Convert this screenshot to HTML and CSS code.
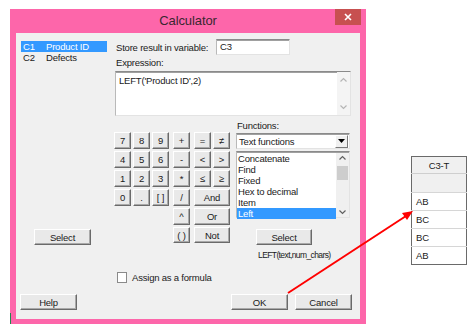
FILE: index.html
```html
<!DOCTYPE html>
<html lang="en">
<head>
    <meta charset="UTF-8">
    <meta name="viewport" content="width=device-width, initial-scale=1.0">
    <title>Calculator</title>
    <link rel="stylesheet" href="styles.css">
</head>
<body>
    <div class="screen">
        <div class="dialog">
            <div class="titlebar">
                <span></span>
                <span class="title">Calculator</span>
                <span class="close">
                    <svg width="26" height="16" viewBox="0 0 26 16"><path d="M10 5 L16 11 M16 5 L10 11" stroke="#fff" stroke-width="1.6"/></svg>
                </span>
            </div>
            <div class="client">
                <div class="main">
                    <div class="left">
                        <div class="listbox">
                            <div class="col-item selected"><span class="col-id">C1</span>Product ID</div>
                            <div class="col-item"><span class="col-id">C2</span>Defects</div>
                        </div>
                        <button class="btn btn-select-cols">Select</button>
                    </div>
                    <div class="right">
                        <div class="store-row">
                            <label class="store-label">Store result in variable:</label>
                            <div class="field store-input">C3</div>
                        </div>
                        <div class="expr-label">Expression:</div>
                        <div class="field expr">
                            <div class="expr-text">LEFT('Product ID',2)</div>
                            <div class="vscroll faint">
                                <svg width="13" height="8" viewBox="0 0 13 8"><path d="M3.5 5.5 L6.5 2.5 L9.5 5.5" fill="none" stroke="#b5b5b5" stroke-width="1.2"/></svg>
                                <svg width="13" height="8" viewBox="0 0 13 8"><path d="M3.5 2.5 L6.5 5.5 L9.5 2.5" fill="none" stroke="#b5b5b5" stroke-width="1.2"/></svg>
                            </div>
                        </div>
                        <div class="lower">
                            <div class="keypad">
                                <button class="btn key">7</button>
                                <button class="btn key">8</button>
                                <button class="btn key">9</button>
                                <button class="btn key op">+</button>
                                <button class="btn key op">=</button>
                                <button class="btn key">&ne;</button>

                                <button class="btn key">4</button>
                                <button class="btn key">5</button>
                                <button class="btn key">6</button>
                                <button class="btn key op">-</button>
                                <button class="btn key op">&lt;</button>
                                <button class="btn key">&gt;</button>

                                <button class="btn key">1</button>
                                <button class="btn key">2</button>
                                <button class="btn key">3</button>
                                <button class="btn key op">*</button>
                                <button class="btn key op">&le;</button>
                                <button class="btn key">&ge;</button>

                                <button class="btn key">0</button>
                                <button class="btn key">.</button>
                                <button class="btn key">[ ]</button>
                                <button class="btn key op">/</button>
                                <button class="btn key wide">And</button>

                                <button class="btn key op col4">^</button>
                                <button class="btn key wide">Or</button>

                                <button class="btn key op col4 last">( )</button>
                                <button class="btn key wide last">Not</button>
                            </div>
                            <div class="functions">
                                <div class="fn-label">Functions:</div>
                                <div class="field dropdown">
                                    <span>Text functions</span>
                                    <span class="drop-btn">
                                        <svg width="7" height="4" viewBox="0 0 7 4"><path d="M0 0 H7 L3.5 4 Z" fill="#000"/></svg>
                                    </span>
                                </div>
                                <div class="field fn-list">
                                    <div class="fn-items">
                                        <div class="fn-item">Concatenate</div>
                                        <div class="fn-item">Find</div>
                                        <div class="fn-item">Fixed</div>
                                        <div class="fn-item">Hex to decimal</div>
                                        <div class="fn-item">Item</div>
                                        <div class="fn-item selected">Left</div>
                                    </div>
                                    <div class="vscroll">
                                        <svg width="13" height="10" viewBox="0 0 13 10"><path d="M3.5 6.5 L6.5 3.5 L9.5 6.5" fill="none" stroke="#606060" stroke-width="1.2"/></svg>
                                        <div class="thumb"></div>
                                        <svg width="13" height="10" viewBox="0 0 13 10"><path d="M3.5 3.5 L6.5 6.5 L9.5 3.5" fill="none" stroke="#606060" stroke-width="1.2"/></svg>
                                    </div>
                                </div>
                                <button class="btn btn-select-fn">Select</button>
                                <div class="fn-syntax">LEFT(text,num_chars)</div>
                            </div>
                        </div>
                    </div>
                </div>
                <div class="formula-row">
                    <span class="checkbox"></span>
                    <span>Assign as a formula</span>
                </div>
                <div class="bottom-row">
                    <button class="btn btn-bottom">Help</button>
                    <button class="btn btn-bottom btn-ok">OK</button>
                    <button class="btn btn-bottom">Cancel</button>
                </div>
            </div>
        </div>

        <table class="sheet">
            <thead>
                <tr><th>C3-T</th></tr>
            </thead>
            <tbody>
                <tr class="name-row"><td></td></tr>
                <tr><td>AB</td></tr>
                <tr><td>BC</td></tr>
                <tr><td>BC</td></tr>
                <tr><td>AB</td></tr>
            </tbody>
        </table>

        <!-- red pointer from OK to the new column -->
        <svg class="arrow" width="475" height="331" viewBox="0 0 475 331">
            <line x1="288" y1="293" x2="406" y2="216" stroke="#ff0000" stroke-width="2"/>
            <polygon points="413,211 407,220 402,213" fill="#ff0000"/>
        </svg>
    </div>
</body>
</html>
```

FILE: styles.css
```css
* {
    margin: 0;
    padding: 0;
    box-sizing: border-box;
}
body {
    font-family: 'Liberation Sans', Tahoma, Arial, sans-serif;
    font-size: 9.5px;
    letter-spacing: -0.2px;
    color: #1a1a1a;
    background-color: #fff;
}
.screen {
    position: relative;
    width: 475px;
    height: 331px;
    display: flex;
    align-items: flex-start;
    overflow: hidden;
}
.dialog {
    position: relative;
    margin: 9px 0 0 10px;
    width: 356px;
    height: 315px;
    background-color: #fd66aa;
    padding: 0 6px 5px;
}
.dialog:before {
    content: '';
    position: absolute;
    left: 0;
    top: 304px;
    width: 1px;
    height: 11px;
    background-color: #1f8a4c;
}
.titlebar {
    display: grid;
    grid-template-columns: 1fr auto 1fr;
    height: 24px;
}
.title {
    font-size: 13px;
    letter-spacing: -0.1px;
    line-height: 23px;
    color: #3a2630;
}
.close {
    justify-self: end;
    margin-right: -1px;
    width: 26px;
    height: 16px;
    background-color: #c75050;
    display: flex;
}
.client {
    height: 286px;
    background-color: #f0f0f0;
    padding: 6px 8px 0 4px;
    display: flex;
    flex-direction: column;
}
.main {
    display: flex;
    gap: 7px;
}
.left {
    width: 88px;
    display: flex;
    flex-direction: column;
    align-items: flex-start;
}
.field {
    background-color: #fff;
    border: 1px solid;
    border-color: #8a8a8a #e3e3e3 #e3e3e3 #b9b9b9;
    box-shadow: inset 0 1px 0 #a0a0a0;
}
.listbox {
    margin-top: 1px;
    width: 88px;
    height: 172px;
    padding: 1px;
}
.col-item {
    height: 11px;
    line-height: 11px;
    padding-left: 2px;
}
.col-item.selected {
    background-color: #3399ff;
    color: #fff;
}
.col-id {
    display: inline-block;
    width: 23px;
}
.btn {
    font: inherit;
    letter-spacing: inherit;
    color: #1a1a1a;
    background-color: #e9e9e9;
    border: 1px solid;
    border-color: #fff #6a6a6a #6a6a6a #fff;
    box-shadow: inset -1px -1px 0 #a9a9a9;
    display: flex;
    align-items: center;
    justify-content: center;
}
.btn-select-cols {
    margin: 17px 0 0 14px;
    width: 57px;
    height: 16px;
}
.right {
    width: 236px;
}
.store-row {
    display: flex;
    align-items: center;
    height: 16px;
}
.store-label {
    width: 101px;
    padding-left: 1px;
}
.store-input {
    width: 74px;
    height: 16px;
    padding-left: 3px;
    line-height: 14px;
}
.expr-label {
    margin-top: 2px;
    line-height: 12px;
    padding-left: 1px;
}
.expr {
    margin-top: 2px;
    height: 45px;
    display: flex;
}
.expr-text {
    flex: 1;
    padding: 3px 0 0 3px;
    line-height: 11px;
}
.vscroll {
    width: 13px;
    background-color: #f0f0f0;
    display: flex;
    flex-direction: column;
    justify-content: space-between;
    align-items: center;
}
.vscroll.faint {
    background-color: #f4f4f4;
    padding: 4px 0;
}
.lower {
    margin-top: 4px;
    display: flex;
}
.keypad {
    margin: 12px 0 0 -1px;
    display: grid;
    grid-template-columns: 17px 17px 17px 19px 19px 17px;
    grid-auto-rows: 17px;
    column-gap: 2px;
    row-gap: 2px;
}
.key {
    width: 17px;
    height: 17px;
}
.key.op {
    justify-self: end;
}
.key.col4 {
    grid-column: 4;
}
.key.wide {
    grid-column: 5 / span 2;
    justify-self: end;
    width: 36px;
}
.key.last {
    height: 16px;
}
.functions {
    margin-left: 6px;
    width: 114px;
    display: flex;
    flex-direction: column;
    align-items: flex-start;
}
.fn-label {
    line-height: 12px;
    padding-left: 1px;
}
.dropdown {
    margin-top: 1px;
    width: 114px;
    height: 16px;
    display: flex;
    align-items: center;
    justify-content: space-between;
    padding-left: 2px;
}
.drop-btn {
    width: 13px;
    height: 13px;
    border: 1px solid;
    border-color: #fff #7a7a7a #7a7a7a #fff;
    background-color: #f0f0f0;
    display: flex;
    align-items: center;
    justify-content: center;
    margin-right: 1px;
}
.fn-list {
    margin-top: 2px;
    width: 114px;
    height: 67px;
    display: flex;
    padding-top: 1px;
}
.fn-items {
    flex: 1;
}
.fn-item {
    height: 11px;
    line-height: 11px;
    padding-left: 1px;
}
.fn-item.selected {
    background-color: #3399ff;
    color: #fff;
}
.fn-list .vscroll {
    justify-content: flex-start;
}
.thumb {
    margin-top: 3px;
    width: 11px;
    height: 14px;
    background-color: #cdcdcd;
}
.fn-list .vscroll svg:last-child {
    margin-top: auto;
}
.btn-select-fn {
    margin: 11px 0 0 20px;
    width: 56px;
    height: 16px;
}
.fn-syntax {
    margin: 4px 0 0 22px;
    line-height: 12px;
    font-size: 8.5px;
    letter-spacing: -0.6px;
}
.formula-row {
    margin-top: 10px;
    padding-left: 97px;
    display: flex;
    align-items: center;
    gap: 5px;
    height: 12px;
}
.checkbox {
    width: 10px;
    height: 11px;
    background-color: #fff;
    border: 1px solid #8a8a8a;
}
.bottom-row {
    margin-top: 11px;
    display: flex;
    gap: 7px;
}
.btn-bottom {
    width: 57px;
    height: 16px;
}
.btn-ok {
    margin-left: auto;
}
.sheet {
    margin: 156px 0 0 45px;
    width: 56px;
    border-collapse: collapse;
    border: 1px solid #6a6a6a;
}
.sheet th {
    height: 17px;
    font-weight: normal;
    background-color: #f0f0f0;
    text-align: center;
    border-bottom: 1px solid #cfcfcf;
}
.sheet td {
    height: 18px;
    padding-left: 4px;
    border-top: 1px solid #d6d6d6;
}
.sheet .name-row td {
    height: 19px;
    background-color: #f0f0f0;
}
.arrow {
    position: absolute;
    left: 0;
    top: 0;
    pointer-events: none;
}
```
